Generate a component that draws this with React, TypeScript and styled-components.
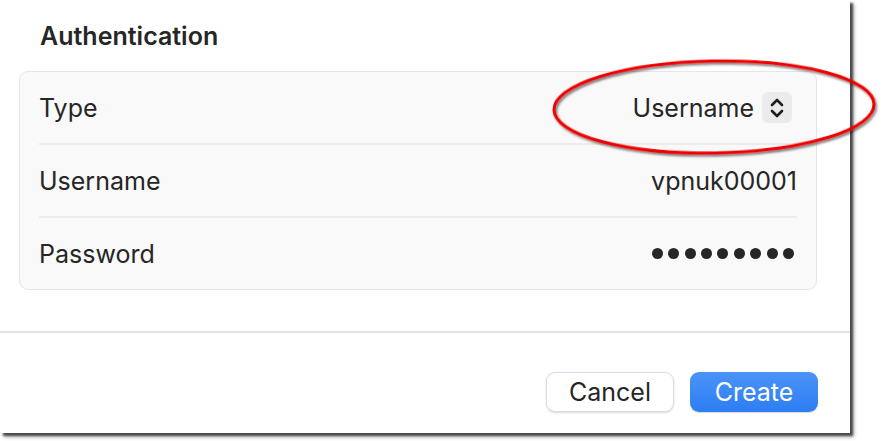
import React from "react";
import styled, { createGlobalStyle } from "styled-components";

const Global = createGlobalStyle`
  html, body { margin: 0; padding: 0; background: #ffffff; }
  body { font-family: Inter, "Noto Sans", "Liberation Sans", sans-serif; color: #262626; }
`;

const Stage = styled.div`
  position: relative;
  width: 883px;
  height: 441px;
  overflow: hidden;
  background: #ffffff;
`;

const Window = styled.div`
  width: 850px;
  height: 433px;
  background: #ffffff;
  box-shadow: 3px 3px 2px rgba(0, 0, 0, 0.6), 4px 4px 4px rgba(0, 0, 0, 0.3);
  display: flex;
  flex-direction: column;
`;

const Heading = styled.h2`
  margin: 0;
  padding: 21px 0 0 40px;
  height: 71px;
  box-sizing: border-box;
  font-size: 25px;
  font-weight: 600;
  line-height: 30px;
  color: #262626;
`;

const Card = styled.div`
  margin-left: 19px;
  width: 798px;
  box-sizing: border-box;
  background: #f9f9f9;
  border: 1px solid #e6e6e6;
  border-radius: 9px;
  padding: 0 19px;
`;

const Row = styled.div<{ $last?: boolean }>`
  height: ${(p) => (p.$last ? "71px" : "73px")};
  box-sizing: border-box;
  display: flex;
  align-items: center;
  justify-content: space-between;
  border-bottom: ${(p) => (p.$last ? "none" : "2px solid #ececec")};
  font-size: 25px;
`;

const Label = styled.span`
  color: #262626;
`;

const Value = styled.span`
  display: flex;
  align-items: center;
  gap: 8px;
  color: #262626;
`;

const Dots = styled.span`
  display: flex;
  gap: 5.4px;
  margin-right: 3px;
`;

const Dot = styled.span`
  width: 11px;
  height: 11px;
  border-radius: 50%;
  background: #262626;
`;

const Stepper = styled.span`
  width: 30px;
  height: 31px;
  border-radius: 6px;
  background: #ebebeb;
  display: flex;
  align-items: center;
  justify-content: center;
  margin-right: 5px;
`;

const Divider = styled.div`
  margin-top: 41px;
  height: 2px;
  background: #e3e3e3;
`;

const Footer = styled.div`
  display: flex;
  justify-content: flex-end;
  gap: 16px;
  padding: 39px 32px 0 0;
`;

const Button = styled.button<{ $primary?: boolean }>`
  width: 128px;
  height: 40px;
  border-radius: 9px;
  font-family: Inter, "Noto Sans", "Liberation Sans", sans-serif;
  font-size: 25px;
  border: ${(p) => (p.$primary ? "none" : "1px solid #dcdcdc")};
  background: ${(p) => (p.$primary ? "linear-gradient(#4b93f7, #2d7ef4)" : "#ffffff")};
  color: ${(p) => (p.$primary ? "#ffffff" : "#262626")};
  box-shadow: ${(p) => (p.$primary ? "0 1px 1px rgba(0,0,0,0.15)" : "0 1px 2px rgba(0,0,0,0.15)")};
  padding: 0;
`;

const Annotation = styled.svg`
  position: absolute;
  left: 540px;
  top: 50px;
  width: 343px;
  height: 120px;
  pointer-events: none;
`;

export default function App() {
  return (
    <Stage>
      <Global />
      <Window>
        <Heading>Authentication</Heading>
        <Card>
          <Row>
            <Label>Type</Label>
            <Value>
              Username
              <Stepper>
                <svg width="16" height="24" viewBox="0 0 16 24" fill="none" stroke="#1f1f1f" strokeWidth="2.6" strokeLinecap="round" strokeLinejoin="round">
                  <path d="M3 9 L8 4 L13 9" />
                  <path d="M3 15 L8 20 L13 15" />
                </svg>
              </Stepper>
            </Value>
          </Row>
          <Row>
            <Label>Username</Label>
            <Value>vpnuk00001</Value>
          </Row>
          <Row $last>
            <Label>Password</Label>
            <Dots>
              {Array.from({ length: 9 }).map((_, i) => (
                <Dot key={i} />
              ))}
            </Dots>
          </Row>
        </Card>
        <Divider />
        <Footer>
          <Button>Cancel</Button>
          <Button $primary>Create</Button>
        </Footer>
      </Window>
      <Annotation viewBox="0 0 343 120">
        <defs>
          <filter id="sh" x="-10%" y="-20%" width="120%" height="140%">
            <feDropShadow dx="1.5" dy="2" stdDeviation="1.2" floodColor="#000" floodOpacity="0.55" />
          </filter>
        </defs>
        <ellipse cx="174" cy="57" rx="160" ry="46" fill="none" stroke="#ee0000" strokeWidth="3" filter="url(#sh)" transform="rotate(-1 174 57)" />
      </Annotation>
    </Stage>
  );
}
